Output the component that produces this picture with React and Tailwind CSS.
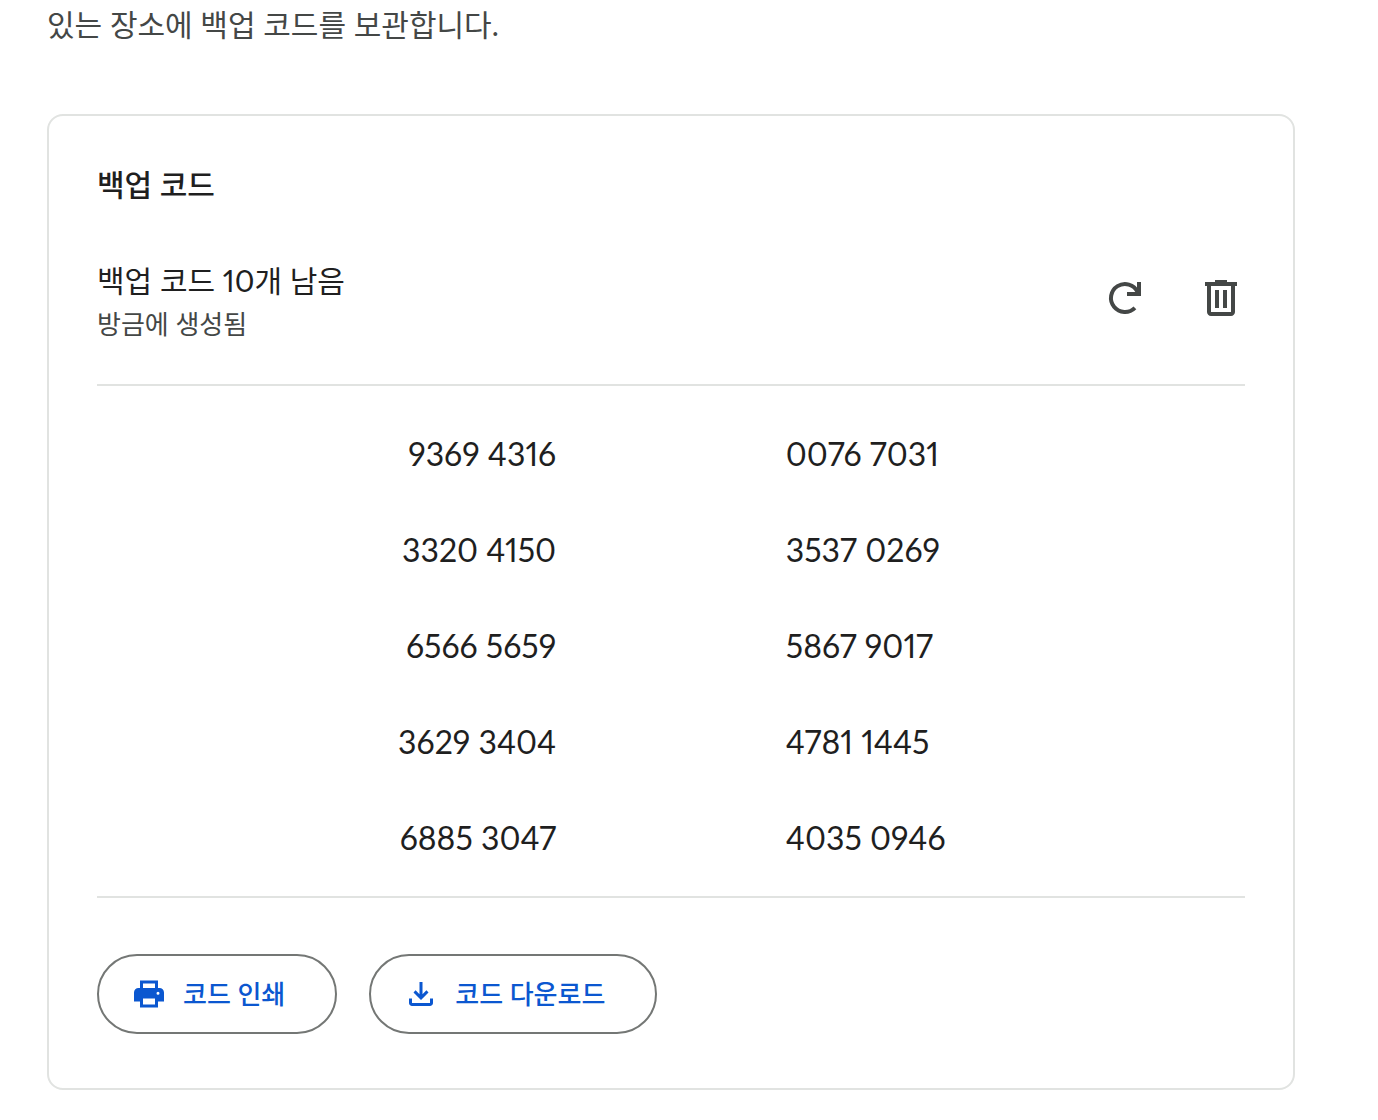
const codes = [
  ['9369 4316', '0076 7031'],
  ['3320 4150', '3537 0269'],
  ['6566 5659', '5867 9017'],
  ['3629 3404', '4781 1445'],
  ['6885 3047', '4035 0946'],
];

function PrintIcon() {
  return (
    <svg viewBox="0 0 24 24" className="size-9" fill="currentColor" aria-hidden="true">
      <path d="M16 8V5H8v3H6V3h12v5h-2zm2 4.500a1 1 0 1 0 0-2 1 1 0 0 0 0 2zM16 19v-4H8v4h8zm2 2H6v-4H2v-6a3 3 0 0 1 3-3h14a3 3 0 0 1 3 3v6h-4v4z" />
    </svg>
  );
}

function DownloadIcon() {
  return (
    <svg viewBox="0 0 24 24" className="size-9" fill="currentColor" aria-hidden="true">
      <path d="M12 16l-5-5 1.400-1.450 2.600 2.600V4h2v8.150l2.600-2.600L17 11l-5 5zm-6 4c-.55 0-1.020-.2-1.410-.59C4.200 19.020 4 18.550 4 18v-3h2v3h12v-3h2v3c0 .55-.2 1.020-.59 1.410-.39.39-.86.59-1.410.59H6z" />
    </svg>
  );
}

function RefreshIcon() {
  return (
    <svg viewBox="0 0 24 24" className="size-12" fill="none" stroke="currentColor" strokeWidth="2" aria-hidden="true">
      <path d="M16.950 16.950A7 7 0 1 1 18.300 9" />
      <path d="M19 4v6h-6" />
    </svg>
  );
}

function TrashIcon() {
  return (
    <svg viewBox="0 0 24 24" className="size-12" fill="currentColor" aria-hidden="true">
      <path d="M15 4V3H9v1H4v2h1v13c0 1.100.9 2 2 2h10c1.100 0 2-.9 2-2V6h1V4h-5zm2 15H7V6h10v13zM9 8h2v9H9zm4 0h2v9h-2z" />
    </svg>
  );
}

export default function App() {
  return (
    <main className="bg-white pl-[47px] pr-[83px] pb-7 font-['Lato','Noto_Sans_CJK_KR',sans-serif] proportional-nums text-[#1f1f1f]">
      <p className="pt-1 text-[30px] leading-10 text-[#444746]">있는 장소에 백업 코드를 보관합니다.</p>
      <section className="mt-[70px] rounded-2xl border-2 border-[#e1e3e1] px-12 pt-12 pb-[54px]">
        <h2 className="text-[30px] leading-10 font-medium">백업 코드</h2>
        <div className="mt-13 flex items-center justify-between pb-10">
          <div>
            <h3 className="text-[30px] leading-12">백업 코드 10개 남음</h3>
            <p className="text-[26px] leading-10 text-[#444746]">방금에 생성됨</p>
          </div>
          <div className="flex gap-12 pb-1 text-[#444746]">
            <button type="button" aria-label="새 코드 생성"><RefreshIcon /></button>
            <button type="button" aria-label="코드 삭제"><TrashIcon /></button>
          </div>
        </div>
        <ul className="border-y-2 border-[#e1e3e1] pt-5 pb-2.5 text-[32px]">
          {codes.map(([left, right]) => (
            <li key={left} className="grid h-24 grid-cols-[2fr_1fr_2fr] items-center">
              <span className="text-right">{left}</span>
              <span className="col-start-3">{right}</span>
            </li>
          ))}
        </ul>
        <div className="mt-14 flex gap-8 text-[26px] font-medium text-[#0b57d0]">
          <button type="button" className="flex h-20 items-center gap-4 rounded-full border-2 border-[#747775] pl-8 pr-[50px]"><PrintIcon />코드 인쇄</button>
          <button type="button" className="flex h-20 items-center gap-4 rounded-full border-2 border-[#747775] pl-8 pr-[50px]"><DownloadIcon />코드 다운로드</button>
        </div>
      </section>
    </main>
  );
}
